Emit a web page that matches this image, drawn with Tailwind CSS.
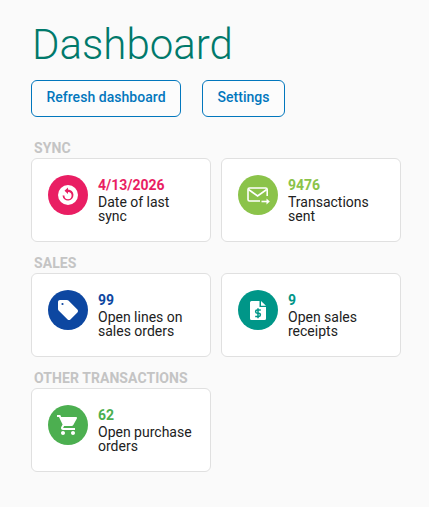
<!DOCTYPE html>
<html lang="en">
<head>
<meta charset="UTF-8" />
<title>Dashboard</title>
<script src="https://cdn.jsdelivr.net/npm/@tailwindcss/browser@4"></script>
</head>
<body class="bg-[#fafafa] font-['Roboto',sans-serif]">
<div class="w-[429px] h-[507px] overflow-hidden pl-[31px] pt-[19px]">
  <h1 class="text-[42px] leading-[52px] font-light text-[#00796b] pl-[1px]">Dashboard</h1>
  <div class="flex gap-[21px] mt-[9px]">
    <button class="w-[150px] h-[37px] pb-[4px] border border-[#0277bd] rounded-md text-sm font-medium tracking-[0.003em] text-[#0277bd] bg-white/40">Refresh dashboard</button>
    <button class="w-[83px] h-[37px] pb-[4px] border border-[#0277bd] rounded-md text-sm font-medium tracking-[0.003em] text-[#0277bd] bg-white/40">Settings</button>
  </div>

  <h2 class="mt-[21px] pl-[3px] text-sm leading-[20px] font-bold tracking-[0.005em] text-[#c4c4c4] uppercase">Sync</h2>
  <div class="flex gap-[10px]">
    <div class="w-[180px] h-[84px] bg-white border border-[#e0e0e0] rounded-md flex items-start pl-[16px] pt-[16px] gap-[10px]">
      <div class="w-[40px] h-[40px] rounded-full bg-[#e91e63] flex items-center justify-center shrink-0">
        <svg width="24" height="24" viewBox="0 0 24 24"><circle cx="12" cy="12" r="10" fill="#fff"/><path d="M12 6.500V4.500L8.500 7.800 12 11V9a3.600 3.600 0 1 1-3.600 3.600H6.500A5.500 5.500 0 1 0 12 6.500z" fill="#e91e63"/></svg>
      </div>
      <div class="pt-[3px]">
        <div class="text-sm leading-[15px] font-bold text-[#e91e63]">4/13/2026</div>
        <div class="text-sm leading-[14px] text-[#212121] mt-[2px]">Date of last<br>sync</div>
      </div>
    </div>
    <div class="w-[180px] h-[84px] bg-white border border-[#e0e0e0] rounded-md flex items-start pl-[16px] pt-[16px] gap-[10px]">
      <div class="w-[40px] h-[40px] rounded-full bg-[#8bc34a] flex items-center justify-center shrink-0">
        <svg width="24" height="24" viewBox="0 0 24 24" fill="none" stroke="#fff" stroke-width="1.600"><path d="M21.200 13V6.500A1.500 1.500 0 0 0 19.700 5H3.500A1.500 1.500 0 0 0 2 6.500v10A1.500 1.500 0 0 0 3.500 18H14"/><path d="M2.500 6.500 11.600 13l9.100-6.500"/><path d="M15.500 18.500H21"/><path d="M20.500 15.500v6l3.300-3z" fill="#fff" stroke="none"/></svg>
      </div>
      <div class="pt-[3px]">
        <div class="text-sm leading-[15px] font-bold text-[#8bc34a]">9476</div>
        <div class="text-sm leading-[14px] text-[#212121] mt-[2px]">Transactions<br>sent</div>
      </div>
    </div>
  </div>

  <h2 class="mt-[12px] pl-[3px] text-sm leading-[19px] font-bold tracking-[0.005em] text-[#c4c4c4] uppercase">Sales</h2>
  <div class="flex gap-[10px]">
    <div class="w-[180px] h-[84px] bg-white border border-[#e0e0e0] rounded-md flex items-start pl-[16px] pt-[16px] gap-[10px]">
      <div class="w-[40px] h-[40px] rounded-full bg-[#0d47a1] flex items-center justify-center shrink-0">
        <svg width="24" height="24" viewBox="0 0 24 24"><path fill="#fff" d="M21.410 11.580l-9-9C12.050 2.220 11.550 2 11 2H4c-1.100 0-2 .9-2 2v7c0 .55.22 1.050.59 1.420l9 9c.36.36.86.58 1.410.58s1.050-.22 1.410-.59l7-7c.37-.36.59-.86.59-1.410s-.23-1.060-.59-1.420z"/><circle cx="6.500" cy="6" r="1.100" fill="#0d47a1"/></svg>
      </div>
      <div class="pt-[3px]">
        <div class="text-sm leading-[15px] font-bold text-[#0d47a1]">99</div>
        <div class="text-sm leading-[14px] text-[#212121] mt-[2px]">Open lines on<br>sales orders</div>
      </div>
    </div>
    <div class="w-[180px] h-[84px] bg-white border border-[#e0e0e0] rounded-md flex items-start pl-[16px] pt-[16px] gap-[10px]">
      <div class="w-[40px] h-[40px] rounded-full bg-[#009688] flex items-center justify-center shrink-0">
        <svg width="24" height="24" viewBox="0 0 24 24"><path fill="#fff" d="M13.500 3H5.500A1.500 1.500 0 0 0 4 4.500v16A1.500 1.500 0 0 0 5.500 22h13a1.500 1.500 0 0 0 1.500-1.500V9h-6.500z"/><path fill="#fff" d="M15 3l5 4.800h-5z"/><path fill="none" stroke="#009688" stroke-width="1.500" d="M14.800 12h-3.600a1.600 1.600 0 0 0 0 3.200h1.600a1.600 1.600 0 0 1 0 3.200H9.200M12 10.200v10"/></svg>
      </div>
      <div class="pt-[3px]">
        <div class="text-sm leading-[15px] font-bold text-[#009688]">9</div>
        <div class="text-sm leading-[14px] text-[#212121] mt-[2px]">Open sales<br>receipts</div>
      </div>
    </div>
  </div>

  <h2 class="mt-[12px] pl-[3px] text-sm leading-[19px] font-bold tracking-[0.005em] text-[#c4c4c4] uppercase">Other transactions</h2>
  <div class="flex gap-[10px]">
    <div class="w-[180px] h-[84px] bg-white border border-[#e0e0e0] rounded-md flex items-start pl-[16px] pt-[16px] gap-[10px]">
      <div class="w-[40px] h-[40px] rounded-full bg-[#4caf50] flex items-center justify-center shrink-0">
        <svg width="24" height="24" viewBox="0 0 24 24"><path fill="#fff" d="M7 18c-1.100 0-1.990.9-1.990 2S5.900 22 7 22s2-.9 2-2-.9-2-2-2zM1 2v2h2l3.600 7.590-1.350 2.450c-.16.28-.25.61-.25.96 0 1.100.9 2 2 2h12v-2H7.420c-.14 0-.25-.11-.25-.25l.03-.12.9-1.630h7.450c.75 0 1.410-.41 1.750-1.030l3.580-6.490c.08-.14.12-.31.12-.48 0-.55-.45-1-1-1H5.210l-.94-2H1zm16 16c-1.100 0-1.990.9-1.990 2s.89 2 1.990 2 2-.9 2-2-.9-2-2-2z"/></svg>
      </div>
      <div class="pt-[3px]">
        <div class="text-sm leading-[15px] font-bold text-[#4caf50]">62</div>
        <div class="text-sm leading-[14px] text-[#212121] mt-[2px]">Open purchase<br>orders</div>
      </div>
    </div>
  </div>
</div>
</body>
</html>
